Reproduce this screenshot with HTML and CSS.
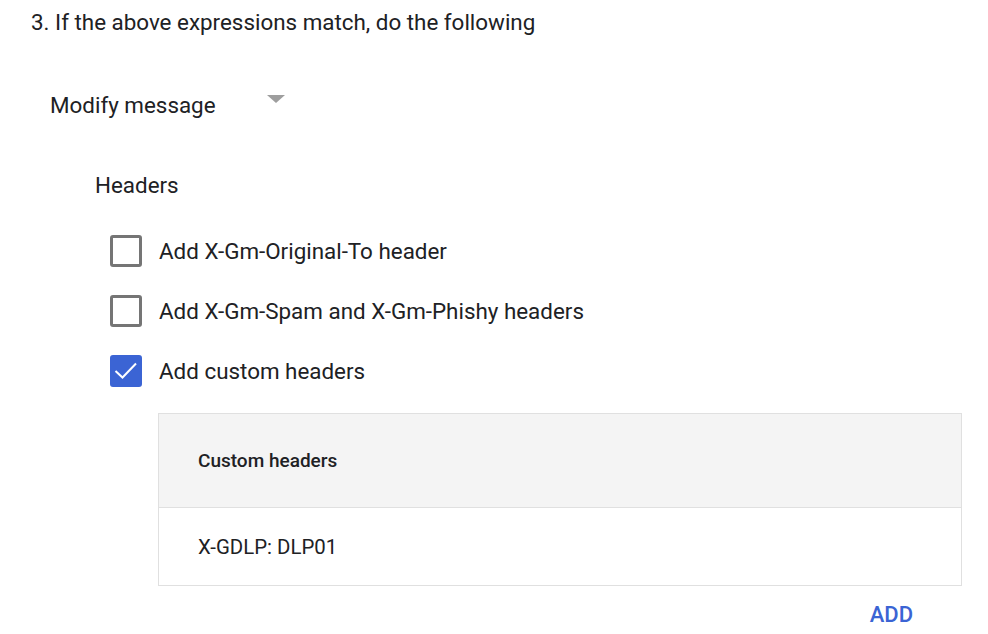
FILE: index.html
```html
<!DOCTYPE html>
<html lang="en">
<head>
  <meta charset="UTF-8">
  <title>Modify message</title>
  <link rel="stylesheet" href="styles.css">
</head>
<body>
  <div class="step">
    <h3 class="step-title">3. If the above expressions match, do the following</h3>

    <div class="action-select">
      <span class="action-label">Modify message</span>
      <span class="arrow"></span>
    </div>

    <div class="section">
      <div class="section-title">Headers</div>

      <label class="check-row">
        <span class="box"></span>
        <span>Add X-Gm-Original-To header</span>
      </label>
      <label class="check-row">
        <span class="box"></span>
        <span>Add X-Gm-Spam and X-Gm-Phishy headers</span>
      </label>
      <label class="check-row">
        <span class="box checked">
          <svg width="26" height="26" viewBox="0 0 26 26"><path d="M2.5 13l7 6.5L23 5.5" fill="none" stroke="#fff" stroke-width="2"/></svg>
        </span>
        <span>Add custom headers</span>
      </label>

      <div class="table-wrap">
        <table class="headers-table">
          <thead>
            <tr><th>Custom headers</th></tr>
          </thead>
          <tbody>
            <tr><td>X-GDLP: DLP01</td></tr>
          </tbody>
        </table>
        <div class="actions">
          <button class="add-btn" type="button">ADD</button>
        </div>
      </div>
    </div>
  </div>
</body>
</html>
```

FILE: styles.css
```css
body {
  margin: 0;
  font-family: Roboto, "Liberation Sans", sans-serif;
  color: #202124;
  background: #fff;
}
.step {
  padding: 9px 0 0 31px;
}
.step-title {
  margin: 0;
  font-size: 22.4px;
  font-weight: 400;
  line-height: 26px;
}
.action-select {
  display: flex;
  align-items: center;
  margin: 55px 0 0 19px;
  height: 30px;
}
.action-label {
  font-size: 22.4px;
  width: 217px;
}
.arrow {
  width: 0;
  height: 0;
  border-left: 9px solid transparent;
  border-right: 9px solid transparent;
  border-top: 8px solid #9e9e9e;
  margin-top: -12px;
}
.section {
  margin: 52px 0 0 64px;
}
.section-title {
  font-size: 22.4px;
  line-height: 26px;
  margin-bottom: 40px;
}
.check-row {
  display: flex;
  align-items: center;
  gap: 17px;
  height: 60px;
  margin: -17px 0 17px 15px;
  font-size: 22.4px;
}
.box {
  width: 26px;
  height: 26px;
  border: 3px solid #757575;
  border-radius: 3px;
  display: flex;
  align-items: center;
  justify-content: center;
  flex: none;
}
.box.checked {
  background: #3b64d4;
  border-color: #3b64d4;
}
.table-wrap {
  margin: -5px 0 0 63px;
  width: 804px;
}
.headers-table {
  width: 100%;
  border-collapse: collapse;
  border: 1px solid #e0e0e0;
}
.headers-table th {
  text-align: left;
  font-size: 19px;
  font-weight: 500;
  background: #f4f4f4;
  height: 93px;
  padding: 0 0 0 39px;
  border-bottom: 1px solid #e0e0e0;
}
.headers-table td {
  font-size: 20.4px;
  height: 77px;
  padding: 0 0 0 39px;
}
.actions {
  display: flex;
  justify-content: flex-end;
}
.add-btn {
  background: none;
  border: none;
  color: #3b64d4;
  font-family: inherit;
  font-size: 22px;
  font-weight: 500;
  padding: 0;
  margin: 16px 49px 0 0;
  cursor: pointer;
}
```
